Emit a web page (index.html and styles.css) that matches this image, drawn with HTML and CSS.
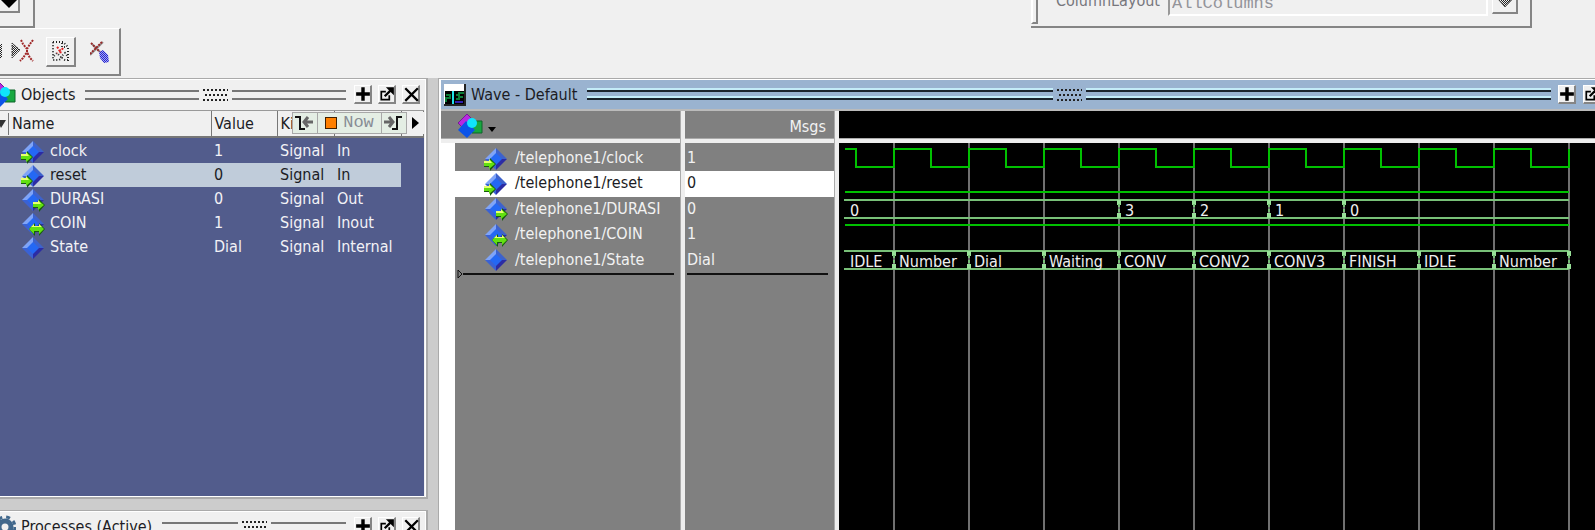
FILE: index.html
```html
<!DOCTYPE html>
<html lang="en">
<head>
<meta charset="utf-8">
<title>Wave - Default</title>
<link rel="stylesheet" href="styles.css">
</head>
<body>
<svg class="defs" aria-hidden="true">
  <defs>
    <pattern id="dots-black" width="2" height="2" patternUnits="userSpaceOnUse"><path d="M0 0h1v1H0zM1 1h1v1H1z" fill="#222"/></pattern>
    <pattern id="dots-blue" width="2" height="2" patternUnits="userSpaceOnUse"><path d="M0 0h2v2H0z" fill="#a8a8f0"/><path d="M0 0h1v1H0zM1 1h1v1H1z" fill="#2424d0"/></pattern>
    <symbol id="gem" viewBox="0 0 24 24">
      <path d="M12 1 1 12h11z" fill="#7fa4f8"/><path d="M12 1l11 11H12z" fill="#3d62cc"/>
      <path d="M1 12l11 11V12z" fill="#3a62d4"/><path d="M23 12 12 23V12z" fill="#2c2ca4"/>
      <path d="M12 6l6 6-6 6-6-6z" fill="#2468f4"/>
    </symbol>
    <symbol id="in" viewBox="0 0 24 24"><use href="#gem"/><path d="M0 15h6v-4l6 6-6 7v-4H0z" fill="#185c10"/><path d="M0 14h5v-2l6 5-6 5v-3H0z" fill="#62e010"/><path d="M0 14h5v-2l3 4H0z" fill="#e8ff70"/></symbol>
    <symbol id="out" viewBox="0 0 24 24"><use href="#gem"/><path d="M12 14h6v-3l6 6-6 7v-4h-6z" fill="#185c10"/><path d="M12 14h5v-2l6 5-6 5v-3h-5z" fill="#62e010"/><path d="M12 14h5v-2l3 4h-8z" fill="#e8ff70"/></symbol>
    <symbol id="inout" viewBox="0 0 24 24"><use href="#gem"/><path d="M8 17l6-6v3h4v-3l6 6-6 7v-4h-4v4z" fill="#185c10"/><path d="M8 17l5-5v2h5v-2l5 5-5 5v-3h-5v3z" fill="#62e010"/><path d="M10 15l3-3v2h5v-2l3 3z" fill="#e8ff70"/></symbol>
    <symbol id="shapes" viewBox="0 0 26 26">
      <path d="M15 8h10v12H15z" fill="#18a840" stroke="#0c6428"/>
      <path d="M1 10 10 1l5 5-9 9z" fill="#b828e0" stroke="#781898"/>
      <path d="M9 8l9 9-8 8-9-8z" fill="#0c54e8"/><circle cx="15" cy="10" r="5" fill="#10e4fc"/>
    </symbol>
    <symbol id="plus" viewBox="2 2 14 14"><path d="M9 3v12M3 9h12" stroke="#000" stroke-width="3"/></symbol>
    <symbol id="undock" viewBox="2 2 14 14"><path d="M8 7H4v7h7v-4" fill="none" stroke="#000" stroke-width="1.5"/><path d="M7 11l5-5" stroke="#000" stroke-width="2"/><path d="M8 3h7v7z"/></symbol>
    <symbol id="close" viewBox="2 2 14 14"><path d="M4 4l11 11M15 4 4 15" stroke="#000" stroke-width="2"/></symbol>
  </defs>
</svg>

<header class="toolbars">
  <div class="toolrow toolrow-top">
    <div class="toolbar toolbar-drop"><button class="tool drop" aria-label="Open list"><svg width="18" height="12"><path d="M0 2h18L9 11z"/></svg></button></div>
    <div class="toolbar toolbar-layout">
      <span class="grip"></span>
      <label for="layout">ColumnLayout</label>
      <input id="layout" class="field" value="AllColumns" disabled>
      <button class="tool layout-drop" aria-label="Choose layout"><svg width="16" height="10"><path d="M0 1h16L8 9z" fill="url(#dots-black)"/><path d="M1 1h14L8 9z" fill="none" stroke="#555"/></svg></button>
    </div>
  </div>
  <div class="toolbar toolbar-edit">
    <button class="flat" aria-label="Delete item"><svg width="36" height="30"><path d="M0 7h2v14H0z M12 6l8 7-8 8z" fill="url(#dots-black)"/><path d="M12 6l8 7-8 8z" fill="none" stroke="#444" stroke-dasharray="2 1"/><path d="M21 3l2 4 4 5v3l-4 6-3 3M33 3l-3 4-3 5v3l3 6 3 3" fill="none" stroke="#a02828" stroke-width="2" stroke-dasharray="2 1"/></svg></button>
    <button class="tool doc" aria-label="Edit document"><svg width="20" height="24"><path d="M2 3h10l5 5v13h-3l-3-2-3 2H2z" fill="none" stroke="#222" stroke-width="2" stroke-dasharray="1 2"/><path d="M11 4v4h5M3 17l3-3 4 4 4-4 3 4" fill="none" stroke="#333" stroke-width="2" stroke-dasharray="1 2"/><path d="M6 8l3 3-3 3M12 9l-2 3-1 3" fill="none" stroke="#e02020" stroke-width="2" stroke-dasharray="2 2"/></svg></button>
    <button class="flat brush" aria-label="Clear item"><svg width="20" height="24"><path d="M2 4l10 10M13 2 0 15" stroke="#999" stroke-width="2"/><path d="M1 3l10 10M12 2 0 14" stroke="#982828" stroke-width="2" stroke-dasharray="2 1"/><path d="M9 12l4-2 5 5 1 7-5 1-4-5z" fill="url(#dots-blue)"/></svg></button>
  </div>
</header>

<main class="work">
  <div class="side">
    <section class="panel objects">
      <div class="title">
        <svg class="title-cut" width="16" height="24" viewBox="10 1 16 24"><use href="#shapes" width="26" height="26"/></svg>
        <h2>Objects</h2>
        <span class="bars"></span><span class="dots"></span><span class="bars"></span>
        <button class="tool win" aria-label="Zoom"><svg><use href="#plus"/></svg></button>
        <button class="tool win" aria-label="Undock"><svg><use href="#undock"/></svg></button>
        <button class="tool win" aria-label="Close"><svg><use href="#close"/></svg></button>
      </div>
      <div class="list">
        <table>
          <colgroup><col class="c-name"><col class="c-value"><col class="c-kind"><col class="c-mode"><col></colgroup>
          <thead><tr><th><span class="sort"><svg width="8" height="10"><path d="M-3 1H6L1 9z" fill="#333"/></svg></span>Name</th><th>Value</th><th>Kind</th><th></th><th></th></tr></thead>
          <tbody>
            <tr><td><svg class="gem"><use href="#in"/></svg>clock</td><td>1</td><td>Signal</td><td>In</td></tr>
            <tr class="picked"><td><svg class="gem"><use href="#in"/></svg>reset</td><td>0</td><td>Signal</td><td>In</td></tr>
            <tr><td><svg class="gem"><use href="#out"/></svg>DURASI</td><td>0</td><td>Signal</td><td>Out</td></tr>
            <tr><td><svg class="gem"><use href="#inout"/></svg>COIN</td><td>1</td><td>Signal</td><td>Inout</td></tr>
            <tr><td><svg class="gem"><use href="#gem"/></svg>State</td><td>Dial</td><td>Signal</td><td>Internal</td></tr>
          </tbody>
        </table>
        <div class="time">
          <button aria-label="Previous"><svg width="20" height="18"><path d="M0 3h5v12h5" fill="none" stroke="#111" stroke-width="2"/><path d="M18 8h-7M13 3 9 8l4 5" fill="none" stroke="#666" stroke-width="3"/></svg></button>
          <button class="now"><i></i>Now</button>
          <button aria-label="Next"><svg width="20" height="18"><path d="M8 15h5V3h5" fill="none" stroke="#111" stroke-width="2"/><path d="M0 8h8M5 3l4 5-4 5" fill="none" stroke="#666" stroke-width="3"/></svg></button>
          <button class="more" aria-label="More"><svg width="7" height="12"><path d="M0 0l7 6-7 6z"/></svg></button>
        </div>
      </div>
    </section>
    <section class="panel processes">
      <div class="title">
        <svg class="title-cut" width="16" height="24"><g fill="none" stroke="#41688c"><circle cx="5" cy="12" r="6" stroke-width="5"/><circle cx="5" cy="12" r="10" stroke-width="3" stroke-dasharray="4 4"/></g></svg>
        <h2>Processes (Active)</h2>
        <span class="bars"></span><span class="dots"></span><span class="bars"></span>
        <button class="tool win" aria-label="Zoom"><svg><use href="#plus"/></svg></button>
        <button class="tool win" aria-label="Undock"><svg><use href="#undock"/></svg></button>
        <button class="tool win" aria-label="Close"><svg><use href="#close"/></svg></button>
      </div>
    </section>
  </div>

  <section class="wave">
    <div class="title active">
      <svg class="wave-icon" width="22" height="22"><path d="M0 0h22v22H0z" fill="#222"/><path d="M0 0h20v20H0z" fill="#fff"/><path d="M1 7h19v13H1z"/><path d="M2 11h4v3h-4v4M12 11h3v-2h5M12 15h3v-2h4" fill="none" stroke="#0a7c38" stroke-width="2"/><path d="M9 7v13" stroke="#20e0e8" stroke-width="2"/><path d="M11 18h8" stroke="#3020b0" stroke-width="2"/></svg>
      <h2>Wave - Default</h2>
      <span class="bars"></span><span class="dots"></span><span class="bars"></span>
      <button class="tool win" aria-label="Zoom"><svg><use href="#plus"/></svg></button>
      <button class="tool win" aria-label="Undock"><svg><use href="#undock"/></svg></button>
      <button class="tool win" aria-label="Close"><svg><use href="#close"/></svg></button>
    </div>
    <div class="panes">
      <div class="pane">
        <div class="pane-head"><button class="shapes" aria-label="Filter"><svg width="26" height="26"><use href="#shapes"/></svg><svg width="8" height="5"><path d="M0 0h8L4 5z"/></svg></button></div>
        <div class="pane-body names">
          <ul>
            <li><svg class="gem"><use href="#in"/></svg>/telephone1/clock</li>
            <li class="picked"><svg class="gem"><use href="#in"/></svg>/telephone1/reset</li>
            <li><svg class="gem"><use href="#out"/></svg>/telephone1/DURASI</li>
            <li><svg class="gem"><use href="#inout"/></svg>/telephone1/COIN</li>
            <li><svg class="gem"><use href="#gem"/></svg>/telephone1/State</li>
          </ul>
          <div class="insert"><svg width="6" height="10"><path d="M1 1l4 4-4 4z" fill="none" stroke="#111"/></svg><span></span></div>
        </div>
      </div>
      <div class="pane">
        <div class="pane-head msgs">Msgs</div>
        <div class="pane-body">
          <ul class="values"><li>1</li><li class="picked">0</li><li>0</li><li>1</li><li>Dial</li></ul>
          <div class="insert"><span></span></div>
        </div>
      </div>
      <div class="pane plot">
        <div class="pane-head"></div>
        <div class="pane-body">
          <svg class="signals" role="img" aria-label="Signal waveforms">
            <g transform="translate(1 -1)">
            <g class="grid"><path d="M54 0v2000M129 0v2000M204 0v2000M279 0v2000M354 0v2000M429 0v2000M504 0v2000M579 0v2000M654 0v2000M729 0v2000"/></g>
            <path class="bit" d="M5 7h11v18h38V7h37v18h38V7h37v18h38V7h37v18h38V7h37v18h38V7h37v18h38V7h37v18h38V7h37v18h38V7h37v18h38V7h37v18h38V7"/>
            <path class="bit" d="M5 50h724M5 83h724"/>
            <path class="bus" d="M4 58h725M4 76h725M4 109h725M4 127h725"/>
            <path class="cross" d="M279 58v5M279 71v5M354 58v5M354 71v5M429 58v5M429 71v5M504 58v5M504 71v5M54 109v5M54 122v5M129 109v5M129 122v5M204 109v5M204 122v5M279 109v5M279 122v5M354 109v5M354 122v5M429 109v5M429 122v5M504 109v5M504 122v5M579 109v5M579 122v5M654 109v5M654 122v5M729 109v5M729 122v5"/>
            <path class="bus edge" d="M279 62v10M354 62v10M429 62v10M504 62v10M54 113v10M129 113v10M204 113v10M279 113v10M354 113v10M429 113v10M504 113v10M579 113v10M654 113v10M729 113v10"/>
            <g class="labels">
              <text x="10" y="74">0</text><text x="285" y="74">3</text><text x="360" y="74">2</text><text x="435" y="74">1</text><text x="510" y="74">0</text>
              <text x="10" y="125">IDLE</text><text x="59" y="125">Number</text><text x="134" y="125">Dial</text><text x="209" y="125">Waiting</text><text x="284" y="125">CONV</text><text x="359" y="125">CONV2</text><text x="434" y="125">CONV3</text><text x="509" y="125">FINISH</text><text x="584" y="125">IDLE</text><text x="659" y="125">Number</text>
            </g>
            </g>
          </svg>
        </div>
      </div>
    </div>
  </section>
</main>
</body>
</html>
```

FILE: styles.css
```css
* { box-sizing: border-box; }
body {
  margin: 0;
  height: 100vh;
  display: flex;
  flex-direction: column;
  overflow: hidden;
  background: #f0f0f0;
  color: #1c1c24;
  font: 16px/24px "DejaVu Sans Condensed", "Noto Sans", sans-serif;
}
.defs { position: absolute; width: 0; height: 0; }
svg { display: block; flex: none; }
h2 { margin: 0; font: inherit; white-space: nowrap; }
button { font: inherit; color: inherit; padding: 0; border: 0; background: none; }

/* Toolbars */
.toolbars { height: 78px; overflow: hidden; flex: none; }
.toolrow { display: flex; justify-content: space-between; height: 28px; align-items: flex-end; }
.toolbar {
  display: flex;
  border: 1px solid #fff;
  border-right: 2px solid #858585;
  border-bottom: 2px solid #858585;
}
.tool {
  display: flex;
  align-items: center;
  justify-content: center;
  background: #f0f0f0;
  border: 1px solid #fff;
  border-right: 2px solid #858585;
  border-bottom: 2px solid #858585;
}
.toolbar-drop { width: 35px; height: 44px; border-left: 0; align-items: flex-end; padding-bottom: 13px; }
.drop { width: 20px; height: 28px; border-left: 0; align-items: flex-end; padding-bottom: 2px; }
.toolbar-layout { height: 44px; margin-right: 63px; align-items: flex-end; padding: 0 12px 10px 0; color: #77777d; border-left: 0; }
.toolbar-layout label { margin: 0 8px 3px 18px; line-height: 24px; }
.grip { width: 7px; height: 38px; margin-bottom: -8px; border: 2px solid #fff; border-right-color: #858585; border-bottom-color: #858585; }
.field {
  width: 320px;
  height: 28px;
  padding: 3px 2px 0;
  border: 2px solid #fff;
  border-left-color: #999;
  border-top-color: #999;
  background: #f0f0f0;
  color: #94949a;
  font: 17px/20px "Liberation Mono", monospace;
}
.layout-drop { width: 26px; height: 28px; margin: 0 0 2px 4px; align-items: flex-end; padding-bottom: 4px; }
.toolbar-edit { width: 121px; height: 48px; border-left: 0; align-items: center; }
.doc { width: 30px; height: 30px; margin-left: 10px; }
.brush { margin-left: 14px; }

/* Work area */
.work { flex: 1; min-height: 0; display: grid; grid-template-columns: 428px minmax(0, 1fr); gap: 10px; background: #ccc; }
.side { display: flex; flex-direction: column; gap: 11px; min-height: 0; }
.panel {
  border: solid #aaa;
  border-width: 1px 2px 2px 0;
  box-shadow: inset -1px 1px #fff;
  background: #f0f0f0;
  overflow: hidden;
}
.objects { flex: 1; display: flex; flex-direction: column; padding-right: 2px; }
.processes { height: 20px; padding-right: 2px; border-bottom: 0; }
.title { display: flex; align-items: center; height: 31px; flex: none; padding-right: 4px; }
.title-cut { margin-right: 5px; }
.bars { flex: 1; height: 10px; border: solid #777; border-width: 2px 0; }
.dots {
  --row: repeating-linear-gradient(90deg, #222 0 2px, transparent 2px 4px);
  width: 27px;
  height: 12px;
  margin: 0 3px;
  background: var(--row) 1px 0 / 25px 2px no-repeat, var(--row) 3px 5px / 25px 2px no-repeat, var(--row) 1px 10px / 25px 2px no-repeat;
}
.title h2 { margin-right: 10px; }
.win { width: 18px; height: 19px; margin-left: 6px; }
.bars + .win { margin-left: 8px; }
.win svg { width: 16px; height: 16px; }

.list { flex: 1; position: relative; background: #525c8c; color: #f2f2f6; border-top: 1px solid #999; border-bottom: 1px solid #fff; }
table { border-collapse: collapse; table-layout: fixed; width: 100%; }
.c-name { width: 211px; }
.c-value { width: 66px; }
.c-kind { width: 57px; }
.c-mode { width: 67px; }
th {
  height: 26px;
  padding: 0 0 0 3px;
  background: #f0f0f0;
  color: #1c1c24;
  font-weight: normal;
  text-align: left;
  border-right: 1px solid #777;
  border-bottom: 2px solid #777;
}
th:first-child { padding: 0; }
.sort { display: inline-flex; width: 9px; height: 22px; margin-right: 3px; border-right: 1px solid #777; align-items: center; vertical-align: middle; }
td { height: 24px; padding: 0 0 0 3px; line-height: 22px; white-space: nowrap; }
td:first-child { padding-left: 21px; }
tbody::before { content: ""; display: table-row; height: 2px; }
.gem { width: 24px; height: 24px; display: inline-block; vertical-align: middle; margin: -2px 5px -2px 0; }
table .picked { background: linear-gradient(#c0ccda, #c0ccda) 0 0 / 401px 100% no-repeat; color: #1c1c24; }
.time { position: absolute; right: 0; top: 1px; display: flex; height: 22px; background: #f0f0f0; color: #888c94; }
.time button { width: 26px; display: grid; place-items: center; background: #e4eee4; border: 1px solid #a8a8a8; }
.time .now { width: 63px; display: flex; align-items: center; justify-content: center; gap: 6px; border-width: 1px 0; font: 17px/20px "Liberation Mono", monospace; }
.now i { width: 12px; height: 12px; background: #ff8000; border: 1px solid #402000; }
.time .more { width: 17px; background: #f0f0f0; border: 0; }

/* Wave window */
.wave { min-width: 0; display: flex; flex-direction: column; overflow: hidden; border: solid #aaa; border-width: 1px 0 0 1px; padding: 1px 0 0 2px; background: #fff; }
.active { background: #9ab3d0; margin-right: -33px; height: 29px; padding-left: 3px; padding-right: 2px; }
.wave-icon { margin-right: 5px; }
.active .bars { border-color: #1c242c; height: 10px; box-shadow: 0 -2px #c4ecf8, inset 0 4px #9ab3d0, inset 0 -2px #c4ecf8; }
.active .win { margin-left: 7px; }
.panes { flex: 1; min-height: 0; display: grid; grid-template-columns: 239px 149px minmax(0, 1fr); gap: 5px; border-top: 2px solid #bbb; background: #eee; }
.pane { display: flex; flex-direction: column; min-width: 0; min-height: 0; box-shadow: 1px 0 #aaa; }
.pane-head { height: 28px; flex: none; background: #808080; border-bottom: 1px solid #aaa; }
.pane-body { flex: 1; min-height: 0; margin-top: 4px; background: #808080; color: #f2f2f2; }
.names { border-left: 14px solid #fff; }
.shapes { display: flex; align-items: center; gap: 5px; margin: 2px 0 0 16px; }
.shapes svg + svg { margin-top: 6px; }
.msgs { color: #f2f2f2; text-align: right; padding: 4px 8px 0 0; }
ul { list-style: none; margin: 0; padding: 3px 0 0; height: 130px; display: grid; grid-template-rows: repeat(5, 1fr); line-height: 24px; }
li { padding-left: 2px; white-space: nowrap; }
.names li { padding-left: 29px; }
.names .gem { margin-right: 7px; }
ul .picked { background: #fff; color: #1c1c24; }
.names .picked { margin-left: -14px; padding-left: 43px; }
.insert { display: flex; align-items: center; height: 10px; margin-top: -4px; padding: 0 6px 0 2px; }
.insert span { flex: 1; height: 2px; background: #111; }
.plot, .plot .pane-head, .plot .pane-body { box-shadow: none; }
.plot .pane-head, .plot .pane-body { background: #000; }
.signals { width: 100%; height: 100%; }
.signals path { fill: none; stroke-width: 2; }
.signals .grid { stroke: #707070; }
.signals .bit { stroke: #00c000; }
.signals .bus { stroke: #78c078; }
.signals .edge { stroke-dasharray: 3 2; }
.signals .cross { stroke: #98e098; stroke-width: 4; }
.labels { fill: #f0f0f0; }
```
